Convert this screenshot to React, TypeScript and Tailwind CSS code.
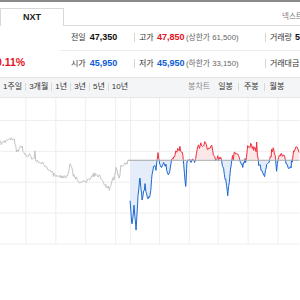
import React from "react";

type P = [number, number];

function rng(seed: number) {
  let s = seed;
  return () => {
    s |= 0;
    s = (s + 0x6d2b79f5) | 0;
    let t = Math.imul(s ^ (s >>> 15), 1 | s);
    t = (t + Math.imul(t ^ (t >>> 7), 61 | t)) ^ t;
    return ((t ^ (t >>> 14)) >>> 0) / 4294967296;
  };
}

function build(anchors: P[], step: number, amp: number, seed: number, spike: number): P[] {
  const r = rng(seed);
  const pts: P[] = [];
  for (let i = 0; i < anchors.length - 1; i++) {
    const [x0, y0] = anchors[i];
    const [x1, y1] = anchors[i + 1];
    for (let x = x0; x < x1; x += step) {
      const t = (x - x0) / (x1 - x0);
      let y = y0 + (y1 - y0) * t + (r() - 0.5) * 2 * amp;
      if (r() < spike) y += (r() - 0.5) * 14;
      pts.push([x, y - 97]);
    }
  }
  const last = anchors[anchors.length - 1];
  pts.push([last[0], last[1] - 97]);
  return pts;
}

const grayAnchors: P[] = [
  [0, 142], [7, 140], [13, 138], [16, 150], [21, 146], [25, 153], [33, 157], [43, 162],
  [53, 174], [60, 176], [67, 175], [70, 162], [73, 174], [80, 181], [87, 180], [93, 174],
  [100, 176], [106, 186], [110, 188], [113, 178], [116, 168], [119, 178], [121, 165],
  [124, 163], [127, 163], [128, 159],
];

const colorAnchors: P[] = [
  [130, 200], [132, 225], [134, 205], [136, 230], [138, 195], [140, 175], [142, 200],
  [145, 185], [148, 200], [150, 195], [152, 175], [154, 165], [156, 168], [157, 160],
  [158, 154], [159, 160], [161, 166], [163, 163], [166, 165], [169, 175], [171, 162],
  [173, 157], [175, 154], [177, 150], [180, 148], [183, 155], [185, 178], [186, 185],
  [187, 162], [190, 160], [195, 160], [198, 147], [201, 144], [204, 143], [205, 141],
  [208, 150], [212, 146], [215, 157], [218, 160], [221, 156], [223, 165], [226, 180],
  [228, 193], [230, 178], [232, 158], [235, 152], [238, 153], [240, 160], [243, 165],
  [246, 160], [248, 147], [251, 144], [254, 148], [257, 150], [259, 163], [262, 170],
  [265, 175], [267, 163], [270, 160], [272, 150], [274, 148], [277, 170], [279, 155],
  [282, 154], [285, 157], [287, 162], [290, 168], [292, 165], [294, 150], [297, 146],
  [300, 152],
];

const BASE = 62;

function Chart() {
  const gray = build(grayAnchors, 0.8, 2.2, 7, 0.05);
  const col = build(colorAnchors, 0.8, 2.2, 11, 0.06);
  const line = (p: P[]) => p.map((q, i) => `${i ? "L" : "M"}${q[0].toFixed(1)},${q[1].toFixed(1)}`).join("");
  const colLine = line(col);
  const area = `M${col[0][0]},${BASE}` + col.map((q) => `L${q[0].toFixed(1)},${q[1].toFixed(1)}`).join("") + `L${col[col.length - 1][0]},${BASE}Z`;
  const hy = [22.5, 53.5, 84.5, 115.5, 146.5];
  const vx = [25.5, 55.5, 85.5, 115.5, 130.5, 159.5, 189.5, 218.5, 248.5, 278.5];
  return (
    <svg width="300" height="203" viewBox="0 0 300 203" className="block">
      <defs>
        <clipPath id="up">
          <rect x="0" y="0" width="300" height={BASE} />
        </clipPath>
        <clipPath id="down">
          <rect x="0" y={BASE} width="300" height={203 - BASE} />
        </clipPath>
      </defs>
      {hy.map((y) => (
        <line key={y} x1="0" x2="300" y1={y} y2={y} stroke="#eeeeee" strokeWidth="1" />
      ))}
      {vx.map((x) => (
        <line key={x} x1={x} x2={x} y1="0" y2="146" stroke="#eeeeee" strokeWidth="1" />
      ))}
      <path d={line(gray)} fill="none" stroke="#c2c2c2" strokeWidth="1" />
      <g clipPath="url(#up)">
        <path d={area} fill="#fde6e8" />
        <path d={colLine} fill="none" stroke="#ef2b38" strokeWidth="1" />
      </g>
      <g clipPath="url(#down)">
        <path d={area} fill="#e4edf9" />
        <path d={colLine} fill="none" stroke="#1b66d2" strokeWidth="1" />
      </g>
      <line x1="128" x2="300" y1={BASE + 0.5} y2={BASE + 0.5} stroke="#a8a8a8" strokeWidth="1" />
    </svg>
  );
}

const font = { fontFamily: '"Liberation Sans", "Noto Sans CJK KR", sans-serif' };

function Sep() {
  return <div className="w-px h-[9px] bg-[#d6d6d6]" />;
}

function TSep() {
  return <div className="w-px h-[8px] bg-[#d9d9d9]" />;
}

export default function App() {
  return (
    <div className="w-[300px] h-[300px] bg-white overflow-hidden flex flex-col" style={font}>
      <div className="h-[2px] bg-[#8a8a8a]" />
      {/* tab row */}
      <div className="flex h-[24px] items-end">
        <div className="w-[64px] h-[18px] border-l border-t border-r border-[#d8d8d8] flex items-center justify-center text-[9px] font-bold text-[#222]">
          NXT
        </div>
        <div className="flex-1 h-full border-b border-[#dcdcdc] flex items-start pt-[9px] pl-[218px] whitespace-nowrap overflow-hidden text-[7.5px] text-[#777]">
          넥스트
        </div>
      </div>
      {/* info */}
      <div className="flex h-[52px] border-b border-[#e4e4e4]">
        <div className="w-[64px] overflow-hidden flex flex-col justify-end pb-[9px]">
          <div className="text-[10.5px] font-bold text-[#e3131e] whitespace-nowrap ml-[-4px] leading-none">0.11%</div>
        </div>
        <div className="flex-1 flex flex-col">
          <div className="h-[25px] flex items-center border-b border-[#ececec] whitespace-nowrap">
            <div className="w-[74px] flex items-center pl-[11px] gap-[4px]">
              <span className="text-[8px] text-[#333]">전일</span>
              <span className="text-[9px] font-bold text-[#111]">47,350</span>
            </div>
            <Sep />
            <div className="w-[130px] flex items-center pl-[4px]">
              <span className="text-[8px] text-[#333] w-[18px]">고가</span>
              <span className="text-[9px] font-bold text-[#e3131e] w-[29px]">47,850</span>
              <span className="text-[7.8px] text-[#666]">(상한가 61,500)</span>
            </div>
            <Sep />
            <div className="flex items-center pl-[4px] gap-[3px]">
              <span className="text-[8px] text-[#333]">거래량</span>
              <span className="text-[9px] font-bold text-[#111]">5</span>
            </div>
          </div>
          <div className="flex-1 flex items-center whitespace-nowrap">
            <div className="w-[74px] flex items-center pl-[11px] gap-[4px]">
              <span className="text-[8px] text-[#333]">시가</span>
              <span className="text-[9px] font-bold text-[#0d5ed6]">45,950</span>
            </div>
            <Sep />
            <div className="w-[130px] flex items-center pl-[4px]">
              <span className="text-[8px] text-[#333] w-[18px]">저가</span>
              <span className="text-[9px] font-bold text-[#0d5ed6] w-[29px]">45,950</span>
              <span className="text-[7.8px] text-[#666]">(하한가 33,150)</span>
            </div>
            <Sep />
            <div className="flex items-center pl-[4px] gap-[4px]">
              <span className="text-[8px] text-[#333]">거래대금</span>
            </div>
          </div>
        </div>
      </div>
      {/* toolbar */}
      <div className="h-[20px] bg-[#f4f5f7] border-b border-[#e6e6e6] flex items-center whitespace-nowrap text-[8px] text-[#333] overflow-hidden">
        <div className="flex items-center gap-[3px] pl-[3px]">
          <span>1주일</span>
          <TSep />
          <span>3개월</span>
          <TSep />
          <span>1년</span>
          <TSep />
          <span>3년</span>
          <TSep />
          <span>5년</span>
          <TSep />
          <span>10년</span>
        </div>
        <div className="flex items-center gap-[5px] ml-[60px]">
          <span className="text-[#8a8a8a] mr-[3px]">봉차트</span>
          <span>일봉</span>
          <TSep />
          <span>주봉</span>
          <TSep />
          <span>월봉</span>
        </div>
      </div>
      <Chart />
    </div>
  );
}
